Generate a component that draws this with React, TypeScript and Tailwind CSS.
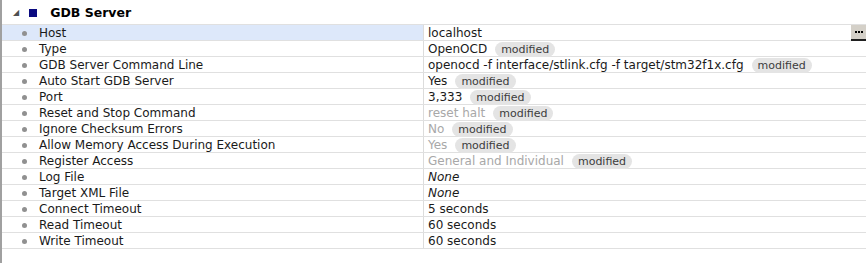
import React from "react";

type Row = { label: string; value: string; mod?: boolean; dim?: boolean; italic?: boolean };

const rows: Row[] = [
  { label: "Host", value: "localhost" },
  { label: "Type", value: "OpenOCD", mod: true },
  { label: "GDB Server Command Line", value: "openocd -f interface/stlink.cfg -f target/stm32f1x.cfg", mod: true },
  { label: "Auto Start GDB Server", value: "Yes", mod: true },
  { label: "Port", value: "3,333", mod: true },
  { label: "Reset and Stop Command", value: "reset halt", mod: true, dim: true },
  { label: "Ignore Checksum Errors", value: "No", mod: true, dim: true },
  { label: "Allow Memory Access During Execution", value: "Yes", mod: true, dim: true },
  { label: "Register Access", value: "General and Individual", mod: true, dim: true },
  { label: "Log File", value: "None", italic: true },
  { label: "Target XML File", value: "None", italic: true },
  { label: "Connect Timeout", value: "5 seconds" },
  { label: "Read Timeout", value: "60 seconds" },
  { label: "Write Timeout", value: "60 seconds" },
];

function Badge() {
  return (
    <span className="ml-[8px] inline-flex h-[15px] items-center rounded-full bg-[#e4e4e4] px-[6px] text-[11px] leading-none text-[#3c3c3c]">
      modified
    </span>
  );
}

export default function App() {
  return (
    <div
      className="h-[263px] w-[866px] border-l-2 border-[#a0a0a0] bg-white text-[12px] text-[#1a1a1a]"
      style={{ fontFamily: '"DejaVu Sans", sans-serif' }}
    >
      <div className="flex h-[24px] items-center pt-[2px]">
        <span className="ml-[11px] text-[8px] text-[#505050]">◢</span>
        <span className="ml-[10px] h-[8px] w-[8px] bg-[#0a0a80]" />
        <span className="ml-[13px] text-[12.5px] font-bold text-black">GDB Server</span>
      </div>
      {rows.map((r, i) => (
        <div
          key={r.label}
          className={`flex border-b border-[#e0e0e0] ${i === 0 ? "h-[17px] border-t" : "h-[16px]"}`}
        >
          <div
            className={`flex w-[422px] items-center border-r border-[#dcdcdc] pt-[1px] ${i === 0 ? "bg-[#dde8fa]" : ""}`}
          >
            <span className="ml-[20px] h-[5px] w-[5px] rounded-full bg-[#909090]" />
            <span className="ml-[12px] whitespace-nowrap leading-none">{r.label}</span>
          </div>
          <div className="flex flex-1 items-center pt-[1px]">
            <span
              className={`ml-[4px] whitespace-nowrap leading-none ${r.dim ? "text-[#a8a8a8]" : ""} ${r.italic ? "italic" : ""}`}
            >
              {r.value}
            </span>
            {r.mod && <Badge />}
            {i === 0 && (
              <span className="-mt-[1px] ml-auto flex h-[16px] w-[15px] items-center justify-center self-start border-b-2 border-[#202020] bg-[#d4d0c8]">
                <span className="flex gap-[1px]">
                  <span className="h-[2px] w-[2px] bg-black" />
                  <span className="h-[2px] w-[2px] bg-black" />
                  <span className="h-[2px] w-[2px] bg-black" />
                </span>
              </span>
            )}
          </div>
        </div>
      ))}
    </div>
  );
}
